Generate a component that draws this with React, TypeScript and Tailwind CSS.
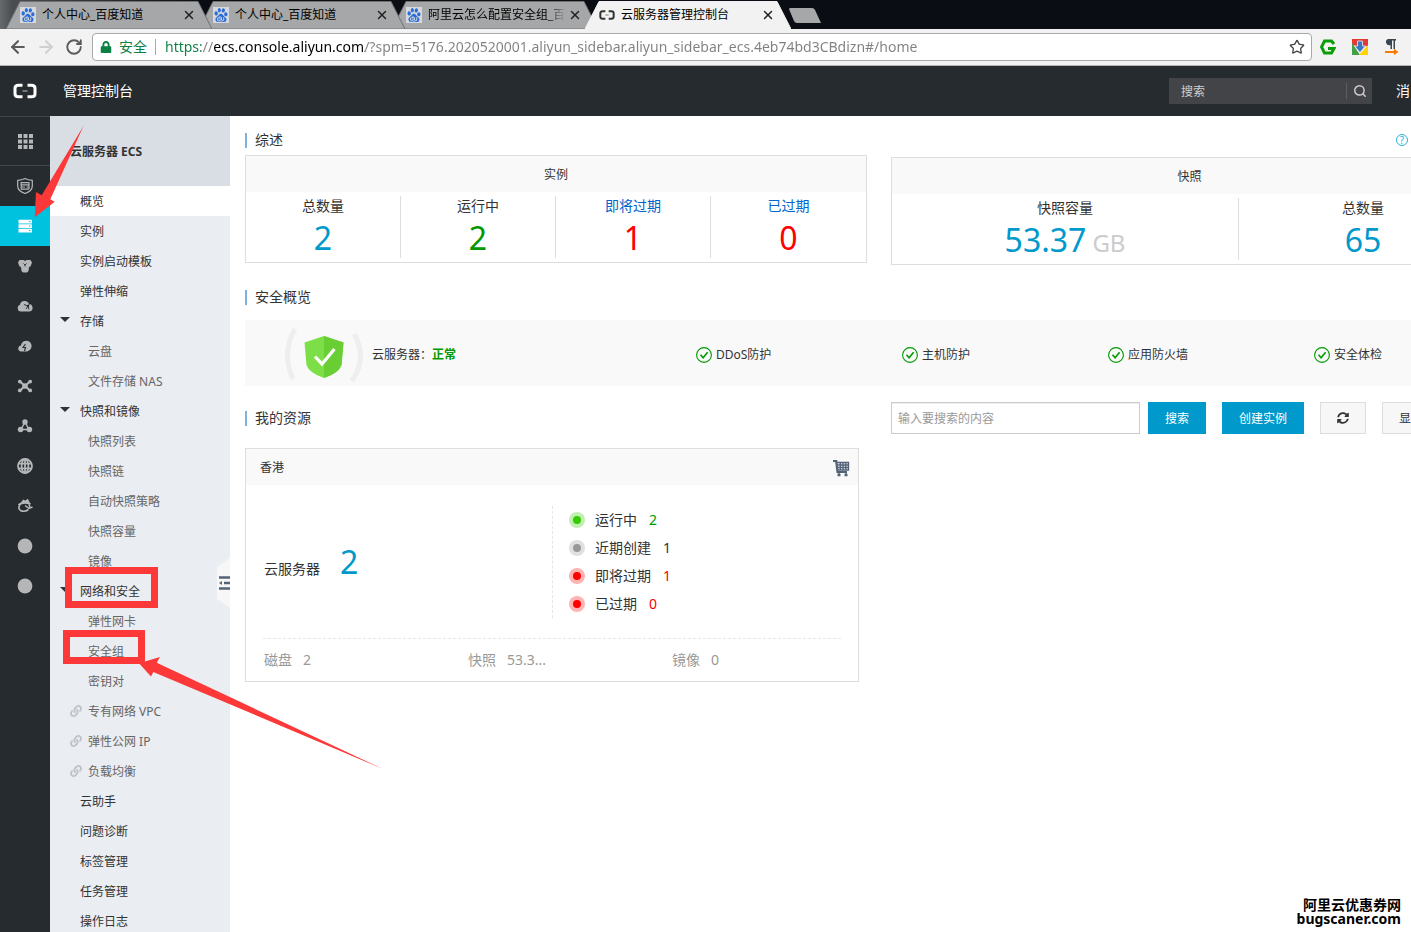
import type { ReactNode } from "react";
import { ArrowLeft, ArrowRight, RotateCw, Search, Star, X } from "lucide-react";
import { FaLink, FaLock, FaSyncAlt } from "react-icons/fa";
import { SiBaidu } from "react-icons/si";
import clsx from "clsx";

/* ---------- icons ---------- */

function BracketLogo({ className, dash }: { className?: string; dash: string }) {
  return (
    <svg viewBox="0 0 24 16" className={className} fill="none">
      <path d="M9.500 2.300H5.500Q2 2.300 2 5.300v5.400q0 3 3.500 3H9.500" stroke="currentColor" strokeWidth="3" />
      <path d="M14.500 2.300h4Q22 2.300 22 5.300v5.400q0 3-3.500 3h-4" stroke="currentColor" strokeWidth="3" />
      <path d="M9.500 8h5" stroke={dash} strokeWidth="2" />
    </svg>
  );
}

function CheckCircle() {
  return (
    <svg viewBox="0 0 16 16" className="size-4" fill="none" stroke="#090">
      <circle cx="8" cy="8" r="7.400" strokeWidth="1.1" />
      <path d="M4.500 7.800l2.600 2.900 4.500-5.400" strokeWidth="1.600" />
    </svg>
  );
}

function ShieldBadge() {
  return (
    <svg viewBox="0 -2 80 56" className="h-14 w-20" fill="none">
      <path d="M10 0Q-4 24 8 50" stroke="#eeeeee" strokeWidth="5" />
      <path d="M69 5Q83 28 67 52" stroke="#eeeeee" strokeWidth="5" />
      <path d="M39 7L58.500 13.500L56.500 36Q54 44 39 49Q24 44 21.500 36L19.500 13.500Z" fill="#7cdf47" />
      <path d="M39 7L58.500 13.500L56.500 36Q54 44 39 49Z" fill="#69cd34" />
      <path d="M30 27.500l7 7.500L49.500 20" stroke="#fff" strokeWidth="3.200" />
    </svg>
  );
}

function CartIcon() {
  return (
    <svg viewBox="0 0 18 18" className="size-[18px]" fill="none" stroke="#546478">
      <path d="M1 2h3.200l1.300 11H15" strokeWidth="2.200" />
      <path d="M5 3.500h11.500V11H6M5 6h11.500M5.500 8.500h11M8.300 3v8M11 3v8M13.800 3v8" strokeWidth="1.400" />
      <path d="M5.500 16h3M12.500 16h3" strokeWidth="2.500" />
      <path d="M7 13v3M14 13v3" strokeWidth="1.400" />
    </svg>
  );
}

const railIcons: { name: string; art: ReactNode }[] = [
  {
    name: "安全",
    art: (
      <g fill="none" stroke="currentColor">
        <path d="M8 .6Q11 2.300 15.300 2.300V8q0 5-7.300 7.500Q.7 13 .7 8V2.300Q5 2.300 8 .6Z" strokeWidth="1.200" />
        <path d="M3.500 4.600h9M3.500 6.800h9M4 9h4M4 11.200h8M4.200 4.500v7M9.500 9h2.800M12 5v6" strokeWidth="1.200" />
      </g>
    ),
  },
  {
    name: "云服务器",
    art: (
      <g>
        <rect x="1.500" y="1.800" width="13.500" height="3.700" rx=".6" />
        <rect x="1.500" y="6.300" width="13.500" height="3.700" rx=".6" />
        <rect x="1.500" y="10.800" width="13.500" height="3.700" rx=".6" />
        <path d="M12 3.600h1.500M12 8.100h1.500M12 12.600h1.500" stroke="#00c1de" />
      </g>
    ),
  },
  {
    name: "数据库",
    art: (
      <g>
        <path d="M1 4.500L2.500 2h4L8 3l1.500-1h4L15 4.500 13.500 8.500 12 9l-.5 4L10 14.500H6L4.500 13 4 9l-1.500-.5Z" />
        <path d="M6.500 5.500L8 7l1.500-1.500M8 7v1.500" fill="none" stroke="#262b2f" strokeWidth=".9" />
      </g>
    ),
  },
  {
    name: "云网络",
    art: (
      <g>
        <path d="M3.500 13.500a3.500 3.500 0 0 1-.6-6.700A4.800 4.800 0 0 1 12 6a3.800 3.800 0 0 1 .6 7.500Z" />
        <path d="M7 6.500l4 1.500 1 3.500M11 8l1.500-2M11 8l-2 3" fill="none" stroke="#262b2f" strokeWidth=".9" />
        <circle cx="11" cy="8" r="1.200" fill="#262b2f" />
      </g>
    ),
  },
  {
    name: "云存储",
    art: (
      <g>
        <path d="M3.500 13.500A3 3 0 0 1 4 7.600a5.300 5.300 0 1 1 8 5Q11 13.500 9 13.500Z" />
        <path d="M8.500 6L6 9.500h2.500L7.500 13" fill="none" stroke="#262b2f" strokeWidth="1.100" />
      </g>
    ),
  },
  {
    name: "负载均衡",
    art: (
      <g>
        <path d="M3 3.500l10 9M13 3.500l-10 9" stroke="currentColor" strokeWidth="2" />
        <circle cx="2.800" cy="3.600" r="1.900" />
        <circle cx="13.200" cy="3.600" r="1.900" />
        <circle cx="2.800" cy="12.400" r="1.900" />
        <circle cx="13.200" cy="12.400" r="1.900" />
        <circle cx="8" cy="8" r="2.800" />
      </g>
    ),
  },
  {
    name: "弹性伸缩",
    art: (
      <g>
        <path d="M8 4L4 11.500h8Z" fill="none" stroke="currentColor" strokeWidth="1.500" />
        <circle cx="8" cy="4" r="2.700" />
        <circle cx="3.600" cy="11.500" r="2.800" />
        <circle cx="12.400" cy="11.500" r="2.800" />
      </g>
    ),
  },
  {
    name: "域名",
    art: (
      <g fill="none" stroke="currentColor" strokeWidth="1.800">
        <circle cx="8" cy="8" r="7" />
        <ellipse cx="8" cy="8" rx="3.400" ry="7" />
        <path d="M8 1v14M1 5.700h14M1 10.300h14" />
      </g>
    ),
  },
  {
    name: "监控",
    art: (
      <g fill="none" stroke="currentColor">
        <path d="M1.500 7q5-4 12-1M5 5l1.500-2 2 1 2-1.500L12 5.500" strokeWidth="2.200" />
        <path d="M3 7Q.500 10 3.500 12.500q4 2 8-1" strokeWidth="1.600" />
        <path d="M8 7.500l4 3 3.500-1.500M12 6.500l1 3" strokeWidth="1.500" />
      </g>
    ),
  },
  { name: "产品一", art: <circle cx="8" cy="8" r="7.400" /> },
  { name: "产品二", art: <circle cx="8" cy="8" r="7.400" /> },
];

/* ---------- browser chrome ---------- */

const tabs = [
  { title: "个人中心_百度知道", layer: "z-30" },
  { title: "个人中心_百度知道", layer: "z-20" },
  { title: "阿里云怎么配置安全组_百", layer: "z-10" },
  { title: "云服务器管理控制台", layer: "z-40", active: true },
];

function BrowserTabs() {
  return (
    <div className="flex h-[29px] shrink-0 overflow-hidden bg-[linear-gradient(90deg,#666a6d_0,#4b4e51_12px,#0a0d14_200px)] pl-1.5">
      {tabs.map((tab, i) => (
        <div key={i} className={clsx("relative flex w-[193px] shrink-0 items-center pl-3.5", tab.layer)}>
          <svg
            viewBox="0 0 206 29"
            preserveAspectRatio="none"
            className="absolute top-0 left-0 h-[29px] w-[206px]"
          >
            <path
              d="M0 29L14 1.500H192L206 29Z"
              fill={tab.active ? "#f2f2f2" : "#a6a7a8"}
              stroke={tab.active ? "#f2f2f2" : "#6f7072"}
            />
          </svg>
          {tab.active ? (
            <BracketLogo className="relative h-3 w-4 text-[#333]" dash="#999" />
          ) : (
            <span className="relative flex size-4 items-center justify-center bg-[#d5d8dc]">
              <SiBaidu className="size-3.5 text-[#2b6cd8]" />
            </span>
          )}
          <span
            className={clsx(
              "relative ml-1.5 w-[140px] text-xs whitespace-nowrap text-black",
              i === 2 && "[mask-image:linear-gradient(90deg,#000_118px,transparent_138px)]",
            )}
          >
            {tab.title}
          </span>
          <button aria-label="关闭标签页" className="relative">
            <X className="size-3.5 text-[#222]" strokeWidth={2.500} />
          </button>
        </div>
      ))}
      <svg viewBox="0 0 34 16" className="mt-2 ml-2.5 h-4 w-[34px]">
        <path d="M1 1Q1 0 3 0H24Q26 0 27 2L33 15H9Q7 15 6 13Z" fill="#a6a7a8" />
      </svg>
    </div>
  );
}

function BrowserToolbar() {
  return (
    <div className="flex h-[37px] shrink-0 items-center border-b border-[#b4b4b4] bg-[#f2f2f2] pr-[7px] pl-2">
      <div className="flex w-[84px] gap-2">
        <button aria-label="后退">
          <ArrowLeft className="size-5 text-[#5a5a5a]" strokeWidth={2.500} />
        </button>
        <button aria-label="前进">
          <ArrowRight className="size-5 text-[#d0d0d0]" strokeWidth={2.500} />
        </button>
        <button aria-label="重新加载" className="px-px">
          <RotateCw className="size-[18px] text-[#5a5a5a]" strokeWidth={2.500} />
        </button>
      </div>
      <div className="flex h-7 min-w-0 flex-1 items-center rounded-sm border border-[#a9a9a9] bg-white pr-1.5 pl-[7px]">
        <FaLock className="size-3 text-[#0b8043]" />
        <span className="ml-[7px] text-sm whitespace-nowrap text-[#0b8043]">安全</span>
        <span className="mx-2 h-4 w-px shrink-0 bg-[#a9a9a9]" />
        <input
          aria-label="地址"
          defaultValue="https://ecs.console.aliyun.com/?spm=5176.2020520001.aliyun_sidebar.aliyun_sidebar_ecs.4eb74bd3CBdizn#/home"
          className="ml-px min-w-0 flex-1 bg-[linear-gradient(90deg,#0b8043_36px,#808080_36px,#808080_48px,#000_48px,#000_200px,#808080_200px)] bg-clip-text text-sm text-transparent outline-none"
        />
        <button aria-label="收藏">
          <Star className="size-4 text-[#444]" />
        </button>
      </div>
      <div className="ml-2 flex shrink-0 gap-4 pr-1">
        <svg viewBox="0 0 16 16" className="size-4" fill="none">
          <path d="M14 5L11.500 2h-7L1.500 8l3 6h7L14 9.500H8" stroke="#0a9d0a" strokeWidth="3" />
        </svg>
        <svg viewBox="0 0 16 16" className="size-4">
          <path d="M0 0h16v7L8 8 0 6Z" fill="#e53935" />
          <path d="M0 4l8 12H0Z" fill="#43a047" />
          <path d="M16 6v10H7Z" fill="#ffd400" />
          <path d="M5.500 2h5v5h3L8 13.500 2.500 7h3Z" fill="#3b78c4" stroke="#e8eef5" strokeWidth=".8" />
        </svg>
        <svg viewBox="0 0 16 16" className="size-4">
          <path d="M4 0h8v1.500h-1V10H9.500V1.500H8V10H6.500V6A3 3 0 0 1 4 0Z" fill="#37474f" />
          <path d="M1 12h9V9.800L14.500 13 10 16v-2H1Z" fill="#f57c00" />
        </svg>
      </div>
    </div>
  );
}

/* ---------- console frame ---------- */

function ConsoleHeader() {
  return (
    <header className="flex h-[50px] shrink-0 items-center bg-[#262b2f] text-white">
      <div className="flex w-[63px] shrink-0 pl-[13px]">
        <BracketLogo className="h-4 w-6" dash="#777" />
      </div>
      <h1 className="text-sm">管理控制台</h1>
      <div className="ml-auto flex h-[26px] w-[203px] items-center bg-[#424448] pl-3">
        <input
          aria-label="搜索产品"
          placeholder="搜索"
          className="min-w-0 flex-1 pt-0.5 text-xs outline-none placeholder:text-[#cfcfcf]"
        />
        <button aria-label="搜索" className="flex h-4 w-[26px] items-center justify-center border-l border-[#5c5e62]">
          <Search className="size-3.5 text-[#cfcfcf]" strokeWidth={2.500} />
        </button>
      </div>
      <a href="#" className="ml-6 pr-px text-sm">
        消
      </a>
    </header>
  );
}

function ProductRail() {
  return (
    <nav className="flex w-[50px] shrink-0 flex-col bg-[#262b2f] text-[#b4b6b8]">
      <button
        aria-label="产品与服务"
        className="flex h-[50px] shrink-0 items-center justify-center border-y border-[#43474b]"
      >
        <svg viewBox="0 0 15 15" className="size-[15px]" fill="currentColor">
          {[0, 5.500, 11].map((y) =>
            [0, 5.500, 11].map((x) => <rect key={`${x}-${y}`} x={x} y={y} width="4" height="4" />),
          )}
        </svg>
      </button>
      {railIcons.map(({ name, art }, i) => (
        <a
          key={name}
          href="#"
          aria-label={name}
          className={clsx("flex h-10 shrink-0 items-center justify-center", i === 1 && "bg-[#00c1de] text-white")}
        >
          <svg viewBox="0 0 16 16" className="size-4" fill="currentColor">
            {art}
          </svg>
        </a>
      ))}
    </nav>
  );
}

type MenuItem = { label: string; kind?: "group" | "child" | "link"; active?: boolean };

const menu: MenuItem[] = [
  { label: "概览", active: true },
  { label: "实例" },
  { label: "实例启动模板" },
  { label: "弹性伸缩" },
  { label: "存储", kind: "group" },
  { label: "云盘", kind: "child" },
  { label: "文件存储 NAS", kind: "child" },
  { label: "快照和镜像", kind: "group" },
  { label: "快照列表", kind: "child" },
  { label: "快照链", kind: "child" },
  { label: "自动快照策略", kind: "child" },
  { label: "快照容量", kind: "child" },
  { label: "镜像", kind: "child" },
  { label: "网络和安全", kind: "group" },
  { label: "弹性网卡", kind: "child" },
  { label: "安全组", kind: "child" },
  { label: "密钥对", kind: "child" },
  { label: "专有网络 VPC", kind: "link" },
  { label: "弹性公网 IP", kind: "link" },
  { label: "负载均衡", kind: "link" },
  { label: "云助手" },
  { label: "问题诊断" },
  { label: "标签管理" },
  { label: "任务管理" },
  { label: "操作日志" },
];

function Sidebar() {
  return (
    <aside className="relative w-[180px] shrink-0 bg-[#eaedf1] text-xs text-[#333]">
      <h2 className="flex h-[70px] items-center bg-[#d9dee4] pt-0.5 pl-5 font-bold">云服务器 ECS</h2>
      <ul>
        {menu.map(({ label, kind, active }) => (
          <li key={label}>
            <a href="#" className={clsx("flex h-[30px] items-center", active && "bg-white")}>
              <span
                className={clsx(
                  "flex shrink-0",
                  kind === "child" || kind === "link" ? "w-[38px]" : "w-[30px]",
                  kind === "link" ? "pl-5" : "pl-2.5",
                )}
              >
                {kind === "group" && (
                  <svg viewBox="0 0 10 8" className="h-2 w-2.5">
                    <path d="M0 0h10L5 5Z" fill="#333" />
                  </svg>
                )}
                {kind === "link" && <FaLink className="size-3 text-[#c0c3c7]" />}
              </span>
              <span className={clsx("pt-0.5", (kind === "child" || kind === "link") && "text-[#666]")}>{label}</span>
            </a>
          </li>
        ))}
      </ul>
      <button aria-label="收起菜单" className="absolute top-[442px] right-0">
        <svg viewBox="0 0 13 50" className="h-[50px] w-[13px]">
          <path d="M0 9L13 0v50L0 41Z" fill="#f7f7f7" />
          <path d="M2 19.500h11M7 25h6M2 30.500h11" stroke="#546478" strokeWidth="2.500" />
          <path d="M2 25l3-2v4Z" fill="#546478" />
        </svg>
      </button>
    </aside>
  );
}

/* ---------- overview page ---------- */

function SectionTitle({ children }: { children: string }) {
  return (
    <h3 className="flex h-4 items-center text-sm">
      <span className="mr-2 h-[15px] w-0.5 bg-[#7eb2de]" />
      {children}
    </h3>
  );
}

interface StatProps {
  label: string;
  value: string;
  unit?: string;
  color: string;
  link?: boolean;
  className?: string;
}

function Stat({ label, value, unit, color, link, className }: StatProps) {
  return (
    <div className={clsx("flex h-[62px] flex-col items-center border-[#ddd] not-last:border-r", className)}>
      {link ? (
        <a href="#" className="text-sm leading-5 text-[#06c]">
          {label}
        </a>
      ) : (
        <span className="text-sm leading-5">{label}</span>
      )}
      <span className={clsx("mt-1 text-[32px] leading-9", color)}>
        {value}
        {unit && <span className="ml-1.5 text-2xl leading-9 text-[#ccc]">{unit}</span>}
      </span>
    </div>
  );
}

const checks = ["DDoS防护", "主机防护", "应用防火墙", "安全体检"];

const states = [
  { label: "运行中", value: 2, halo: "bg-[#c1efb3]", dot: "bg-[#3c0]", color: "text-[#090]" },
  { label: "近期创建", value: 1, halo: "bg-[#e0e0e0]", dot: "bg-[#999]", color: "text-[#333]" },
  { label: "即将过期", value: 1, halo: "bg-[#ffb3b3]", dot: "bg-[#f00]", color: "text-[#f00]" },
  { label: "已过期", value: 0, halo: "bg-[#ffb3b3]", dot: "bg-[#f00]", color: "text-[#f00]" },
];

const usage = [
  { label: "磁盘", value: "2" },
  { label: "快照", value: "53.3..." },
  { label: "镜像", value: "0" },
];

function RegionCard() {
  return (
    <section className="mt-3.5 w-[614px] border border-[#ddd]">
      <div className="flex h-9 items-center justify-between bg-[#f9f9f9] pt-0.5 pr-2 pl-3.5">
        <h4 className="text-xs">香港</h4>
        <button aria-label="购买">
          <CartIcon />
        </button>
      </div>
      <div className="px-[17px] text-sm">
        <div className="flex pt-[21px] pb-5">
          <div className="flex w-[290px] items-baseline border-r border-dashed border-[#e6e6e6] pt-9 pl-px">
            云服务器
            <span className="ml-5 text-[32px] leading-10 text-[#09c]">2</span>
          </div>
          <ul className="pl-4">
            {states.map((s) => (
              <li key={s.label} className="flex h-7 items-center">
                <span className={clsx("mr-2.5 flex size-4 items-center justify-center rounded-full", s.halo)}>
                  <span className={clsx("size-2 rounded-full", s.dot)} />
                </span>
                {s.label}
                <span className={clsx("ml-3", s.color)}>{s.value}</span>
              </li>
            ))}
          </ul>
        </div>
        <div className="flex h-[43px] items-center border-t border-dashed border-[#e6e6e6] pl-px text-[#999]">
          {usage.map((u) => (
            <span key={u.label} className="w-[204px] shrink-0 last:w-auto">
              {u.label}
              <span className="ml-[11px]">{u.value}</span>
            </span>
          ))}
        </div>
      </div>
    </section>
  );
}

function Overview() {
  return (
    <main className="min-w-0 flex-1 overflow-hidden pt-4 pl-[15px] text-[#333]">
      <div className="flex items-center justify-between pr-[3px]">
        <SectionTitle>综述</SectionTitle>
        <a
          href="#"
          aria-label="帮助"
          className="flex size-3 items-center justify-center rounded-full border border-[#2bb0dd] text-[10px] leading-none text-[#2bb0dd]"
        >
          ?
        </a>
      </div>
      <div className="min-w-[1243px]">
        <div className="mt-[7px] flex items-start gap-6">
          <section className="w-[622px] shrink-0 border border-[#ddd]">
            <h4 className="flex h-9 items-center justify-center bg-[#f9f9f9] pt-0.5 text-xs">实例</h4>
            <div className="grid grid-cols-4 py-1">
              <Stat label="总数量" value="2" color="text-[#09c]" />
              <Stat label="运行中" value="2" color="text-[#090]" />
              <Stat label="即将过期" value="1" color="text-[#f00]" link />
              <Stat label="已过期" value="0" color="text-[#f00]" link />
            </div>
          </section>
          <section className="mt-0.5 flex-1 border border-[#ddd]">
            <h4 className="flex h-9 items-center justify-center bg-[#f9f9f9] pt-0.5 text-xs">快照</h4>
            <div className="grid grid-cols-12 py-1">
              <Stat label="快照容量" value="53.37" unit="GB" color="text-[#09c]" className="col-span-7" />
              <Stat label="总数量" value="65" color="text-[#09c]" className="col-span-5" />
            </div>
          </section>
        </div>

        <div className="mt-6">
          <SectionTitle>安全概览</SectionTitle>
        </div>
        <div className="mt-[15px] flex h-[66px] items-center bg-[#f9f9f9] pt-1 pl-10 text-xs">
          <div className="flex w-[411px] shrink-0 items-center">
            <ShieldBadge />
            <span className="ml-[7px]">
              云服务器：<b className="text-[#090]">正常</b>
            </span>
          </div>
          {checks.map((c) => (
            <span key={c} className="flex w-[206px] shrink-0 items-center gap-1">
              <CheckCircle />
              {c}
            </span>
          ))}
        </div>

        <div className="mt-4 flex h-8 items-center text-xs">
          <div className="w-[646px] shrink-0">
            <SectionTitle>我的资源</SectionTitle>
          </div>
          <input
            aria-label="搜索资源"
            placeholder="输入要搜索的内容"
            className="h-8 w-[249px] border border-[#ccc] px-1.5 shadow-[inset_0_1px_1px_rgba(0,0,0,0.075)] outline-none placeholder:text-[#999]"
          />
          <button className="ml-2 h-8 w-[58px] bg-[#09c] pt-0.5 text-white">搜索</button>
          <button className="ml-4 h-8 w-[82px] bg-[#09c] pt-0.5 text-white">创建实例</button>
          <button
            aria-label="刷新"
            className="ml-4 flex h-8 w-[46px] items-center justify-center border border-[#ddd] bg-[#f7f7f7]"
          >
            <FaSyncAlt className="size-3" />
          </button>
          <button className="ml-4 h-8 flex-1 border border-[#ddd] bg-[#f7f7f7] pt-0.5 pl-4 text-left">显</button>
        </div>
        <RegionCard />
      </div>
    </main>
  );
}

/* red boxes and arrows drawn over the menu */
function Annotations() {
  return (
    <svg
      viewBox="0 0 400 800"
      className="pointer-events-none absolute top-0 left-0 z-50 h-[800px] w-[400px]"
      fill="#fc3838"
    >
      <path d="M83.500 126L41.700 195.300L36 192L34.700 217.300L54.700 201.700L50.300 199.300Z" />
      <path d="M383 769L156.700 662.700L160 657L139 663.300L151 676.500L153.300 672Z" />
      <g fill="none" stroke="#fc3838" strokeWidth="7">
        <rect x="68.500" y="570.500" width="86" height="34" />
        <rect x="66.500" y="633.500" width="75" height="27" />
      </g>
    </svg>
  );
}

export default function App() {
  return (
    <div className="relative flex h-screen flex-col overflow-hidden bg-white font-['Noto_Sans','Noto_Sans_CJK_SC',sans-serif]">
      <BrowserTabs />
      <BrowserToolbar />
      <ConsoleHeader />
      <div className="flex min-h-0 flex-1">
        <ProductRail />
        <Sidebar />
        <Overview />
      </div>
      <Annotations />
      <div className="absolute right-2.5 bottom-1.5 text-right text-sm leading-3.5 font-bold text-black">
        <p>阿里云优惠券网</p>
        <p>bugscaner.com</p>
      </div>
    </div>
  );
}
